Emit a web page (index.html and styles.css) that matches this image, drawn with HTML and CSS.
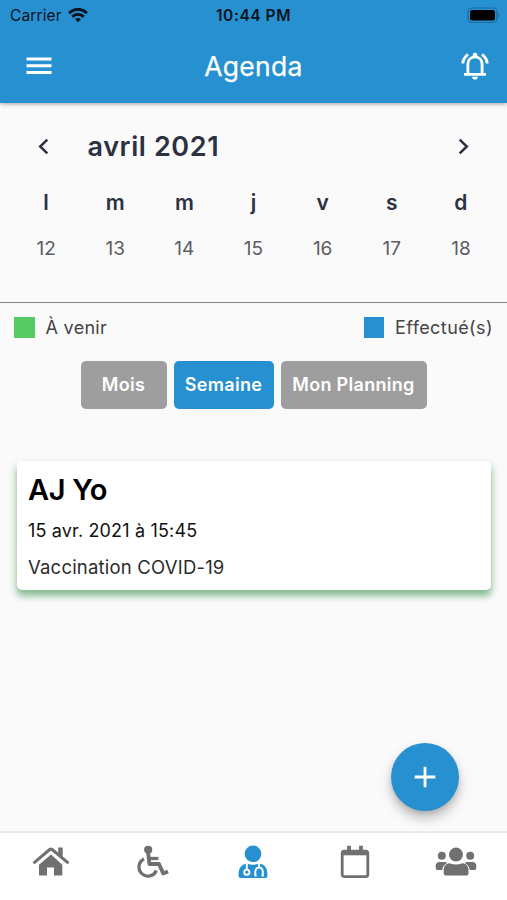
FILE: index.html
```html
<!DOCTYPE html>
<html lang="fr">
<head>
<meta charset="utf-8">
<title>Agenda</title>
<link rel="stylesheet" href="styles.css">
</head>
<body>
<div class="app">
  <header class="header">
    <div class="status">
      <div class="carrier"><span>Carrier</span>
        <svg width="20" height="15" viewBox="0 0 20 15" fill="none" stroke="#07141d" stroke-width="2.9"><path d="M1 5.1Q10-2.5 19 5.1"/><path d="M4.2 8.8Q10 3.9 15.8 8.8"/><path d="M7 11.2Q10 8.6 13 11.2L10 14.2Z" fill="#07141d" stroke="none"/></svg>
      </div>
      <div class="time">10:44 PM</div>
      <svg class="battery" width="34" height="17" viewBox="0 0 34 17"><rect x="1" y="1" width="29" height="14.5" rx="4" fill="none" stroke="#1c6b9d" stroke-width="1.2"/><rect x="3" y="3" width="25" height="10.5" rx="2.3" fill="#000"/><path d="M31.5 6q2 2.2 0 4.5z" fill="#1c6b9d"/></svg>
    </div>
    <div class="bar">
      <svg width="26" height="18" viewBox="0 0 26 18" fill="#fff"><path d="M.5.5h25v3h-25zM.5 7.2h25v3h-25zM.5 13.9h25v3h-25z"/></svg>
      <h1>Agenda</h1>
      <svg width="28" height="28" viewBox="0 0 28 28" fill="none" stroke="#fff" stroke-width="2.8"><path d="M3 22.4h22M6.9 22V12.5C6.9 7.8 9.8 4.8 14 4.8s7.1 3 7.1 7.7V22"/><path d="M1.8 11.5Q2.1 6 7 2.3M26.2 11.5Q25.9 6 21 2.3"/><path d="M11.7 5V3a2.3 2.3 0 0 1 4.6 0V5zM11.2 24.8h5.6a2.8 2.8 0 0 1-5.6 0z" fill="#fff" stroke="none"/></svg>
    </div>
  </header>
  <section class="calendar">
    <div class="month">
      <svg width="12" height="18" viewBox="0 0 12 18" fill="none" stroke="#2d3142" stroke-width="2.5"><path d="M10.3 2.7 3.2 9.5l7.1 6.8"/></svg>
      <h2>avril 2021</h2>
      <svg width="12" height="18" viewBox="0 0 12 18" fill="none" stroke="#2d3142" stroke-width="2.5"><path d="M1.7 2.7 8.8 9.5l-7.1 6.8"/></svg>
    </div>
    <div class="week names"><span>l</span><span>m</span><span>m</span><span>j</span><span>v</span><span>s</span><span>d</span></div>
    <div class="week dates"><span>12</span><span>13</span><span>14</span><span>15</span><span>16</span><span>17</span><span>18</span></div>
  </section>
  <main class="content">
    <div class="legend">
      <div class="key"><i class="swatch upcoming"></i><span class="k1">À venir</span></div>
      <div class="key"><i class="swatch done"></i><span class="k2">Effectué(s)</span></div>
    </div>
    <div class="tabs">
      <button class="tab mois">Mois</button>
      <button class="tab semaine active">Semaine</button>
      <button class="tab planning">Mon Planning</button>
    </div>
    <article class="card">
      <h3>AJ Yo</h3>
      <p class="when">15 avr. 2021 à 15:45</p>
      <p class="what">Vaccination COVID-19</p>
    </article>
    <button class="fab" aria-label="Ajouter"><svg width="22" height="22" viewBox="0 0 22 22" stroke="#fff" stroke-width="2.8"><path d="M11 .7v20.6M.7 11h20.6"/></svg></button>
  </main>
  <nav class="nav">
    <a><svg width="36" height="30" viewBox="0 0 36 30" fill="#707070"><path d="M18 7.6 6 17.8V27.8q0 .7.7.7H14V20.5h7v8h7.5q.8 0 .8-.8V17.8z"/><path d="M1.5 15.3 16.7 2.5q1.2-.9 2.4 0L34.5 15.3" fill="none" stroke="#707070" stroke-width="3" stroke-linecap="round"/><path d="M25.2.6h4.5v10.4l-4.5-3.7z"/></svg></a>
    <a><svg width="34" height="34" viewBox="0 0 34 34" fill="none" stroke="#707070" stroke-width="3.3"><circle cx="13.2" cy="4.8" r="4.1" fill="#707070" stroke="none"/><path d="M13 6.5 14.4 19H24L28.2 28.4 33 26.4" stroke-width="3.8" stroke-linejoin="round"/><path d="M14 13.5h9.4"/><path d="M9 14A9 9 0 1 0 21.3 25.5"/></svg></a>
    <a><svg width="30" height="34" viewBox="0 0 30 34"><circle cx="15" cy="8.8" r="8.3" fill="#2790d0"/><path d="M9 18.6Q1 19.8.6 27.8v3.2Q.6 33 2.6 33h24.7q2.1 0 2.1-2V27.8Q29 19.8 21 18.6q-6 2.5-12 0z" fill="#2790d0"/><g fill="none" stroke="#fff" stroke-width="1.9"><path d="M8.8 18v6.3M21 18v4.2M18.6 30.5h-1.3v-3.2c0-6.2 7.5-6.2 7.5 0v3.2h-1.3"/><circle cx="8.8" cy="27.2" r="2.6"/></g></svg></a>
    <a><svg width="30" height="34" viewBox="0 0 30 34" fill="none" stroke="#707070"><rect x="2.2" y="6.1" width="25.6" height="25.6" rx="2.2" stroke-width="2.8"/><path d="M2 7.8h26" stroke-width="5"/><path d="M9 .8v5M21 .8v5" stroke-width="3.8"/></svg></a>
    <a><svg width="42" height="30" viewBox="0 0 42 30" fill="#707070"><circle cx="21" cy="7.6" r="7"/><circle cx="6.8" cy="8.8" r="4"/><circle cx="35.2" cy="8.8" r="4"/><path d="M14.5 16.3q6.5 2.6 13 0c4 .2 6 3.4 6 7.2v2.4q0 2.7-2.7 2.7H11.4q-2.7 0-2.7-2.7v-2.4c0-3.8 2-7 5.8-7.2zM4.2 15h5.5q1.6 0 2.5 1.1Q8 18 7.2 23H2.6Q.7 23 .7 21v-2Q.7 15.3 4.2 15zM37.8 15h-5.5q-1.6 0-2.5 1.1 4.2 1.9 5 6.9h4.6q1.9 0 1.9-2v-2q0-3.7-3.5-4z"/></svg></a>
  </nav>
</div>
</body>
</html>
```

FILE: styles.css
```css
* { box-sizing: border-box; }
body { margin: 0; font-family: Inter, "Liberation Sans", sans-serif; }
h1, h2, h3, p { margin: 0; }
svg { display: block; flex: none; }
.app { height: 900px; display: flex; flex-direction: column; background: #fafafa; overflow: hidden; }
.header { height: 103px; background: #2790d0; box-shadow: 0 1px 4px rgba(0,0,0,.35); z-index: 1; }
.status { height: 30px; display: grid; grid-template-columns: 1fr auto 1fr; align-items: center; padding: 0 6px 0 10px; color: #07141d; }
.carrier { display: flex; align-items: center; gap: 6px; font-size: 15.5px; letter-spacing: .12px; }
.time { font-size: 15.5px; font-weight: 600; letter-spacing: .55px; margin-right: 4px; }
.battery { justify-self: end; }
.bar { height: 73px; display: grid; grid-template-columns: 1fr auto 1fr; align-items: center; padding: 0 18px 2px 26px; color: #fff; }
.bar svg:last-child { justify-self: end; }
.bar h1 { font-size: 26.5px; font-weight: 400; -webkit-text-stroke: .25px #fff; letter-spacing: .3px; margin-right: 8px; }
.calendar { height: 199.5px; border-bottom: 1.5px solid #858585; padding-top: 23px; }
.month { display: flex; align-items: center; height: 40px; padding: 0 37px; color: #2d3142; }
.month h2 { flex: 1; margin-left: 38.5px; font-size: 27px; font-weight: 600; letter-spacing: .6px; }
.week { display: grid; grid-template-columns: repeat(7, 1fr); margin: 0 11.5px; text-align: center; }
.names { height: 30px; margin-top: 22px; line-height: 30px; font-size: 21px; font-weight: 600; color: #2d3142; }
.dates { height: 30px; margin-top: 15.5px; line-height: 30px; font-size: 19px; color: #5b5d63; }
.content { flex: 1; }
.legend { display: flex; justify-content: space-between; padding: 14px 14px 0 14px; }
.key { display: flex; align-items: center; gap: 11px; height: 22px; font-size: 18px; letter-spacing: .3px; color: #444; }
.k2 { letter-spacing: .42px; }
.swatch { width: 20.5px; height: 20.5px; }
.upcoming { background: #56cb65; }
.done { background: #2790d0; }
.tabs { display: flex; justify-content: center; gap: 7px; margin-top: 22px; }
.tab { height: 48px; padding: 0; border: 0; border-radius: 5px; background: #9e9e9e; color: #fff; font: 600 18px Inter, sans-serif; letter-spacing: .3px; white-space: nowrap; }
.tab.active { background: #2790d0; }
.mois { width: 86px; }
.semaine { width: 100px; }
.planning { width: 146px; }
.card { margin: 52px 16px 0 17px; height: 129px; padding: 10px 11px; background: #fff; border-radius: 5px; box-shadow: 0 6px 7px rgba(75,155,92,.6), 0 3px 10px rgba(75,155,92,.18); color: #111; }
.card h3 { font-size: 29px; font-weight: 600; line-height: 38px; letter-spacing: -.3px; color: #000; }
.when { margin-top: 7px; font-size: 18px; line-height: 30px; letter-spacing: .16px; }
.what { margin-top: 6px; font-size: 18.5px; line-height: 30px; letter-spacing: .2px; color: #2b2b2b; }
.fab { display: flex; align-items: center; justify-content: center; width: 68px; height: 68px; margin: 153px 48.5px 0 auto; padding: 0; border: 0; border-radius: 50%; background: #2790d0; box-shadow: 0 7px 12px rgba(0,0,0,.25), 0 2px 4px rgba(0,0,0,.1); }
.nav { height: 69px; display: grid; grid-template-columns: repeat(5, 1fr); align-items: center; padding: 0 0 10px; border-top: 2px solid #ebebeb; background: #fff; }
.nav a { display: flex; justify-content: center; }
```
